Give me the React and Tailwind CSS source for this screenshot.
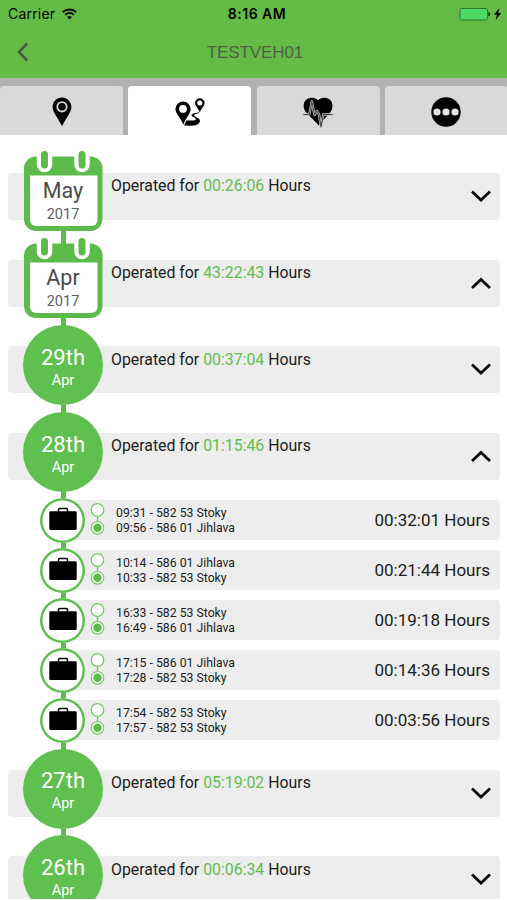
import { useState } from 'react';

const TABS = [
  { id: 'location', icon: PinIcon },
  { id: 'trips', icon: RouteIcon },
  { id: 'health', icon: HeartIcon },
  { id: 'more', icon: MoreIcon },
];

const MONTHS = [
  { title: 'May', sub: '2017', time: '00:26:06', days: [] },
  {
    title: 'Apr',
    sub: '2017',
    time: '43:22:43',
    days: [
      { title: '29th', sub: 'Apr', time: '00:37:04', trips: [] },
      {
        title: '28th',
        sub: 'Apr',
        time: '01:15:46',
        trips: [
          { from: '09:31 - 582 53 Stoky', to: '09:56 - 586 01 Jihlava', time: '00:32:01' },
          { from: '10:14 - 586 01 Jihlava', to: '10:33 - 582 53 Stoky', time: '00:21:44' },
          { from: '16:33 - 582 53 Stoky', to: '16:49 - 586 01 Jihlava', time: '00:19:18' },
          { from: '17:15 - 586 01 Jihlava', to: '17:28 - 582 53 Stoky', time: '00:14:36' },
          { from: '17:54 - 582 53 Stoky', to: '17:57 - 582 53 Stoky', time: '00:03:56' },
        ],
      },
      { title: '27th', sub: 'Apr', time: '05:19:02', trips: [] },
      { title: '26th', sub: 'Apr', time: '00:06:34', trips: [] },
    ],
  },
];

function PinIcon() {
  return (
    <svg width="20" height="30" viewBox="0 0 20 30">
      <path d="M10 .5C4.800.5.6 4.500.6 9.900c0 5.500 5.700 11.100 9.400 19.400 3.700-8.300 9.400-13.900 9.400-19.400C19.400 4.500 15.200.5 10 .5z" />
      <circle cx="10" cy="9.800" r="4.700" fill="none" stroke="#d6d6d6" strokeWidth="1.800" />
    </svg>
  );
}

function RouteIcon() {
  return (
    <svg width="30" height="28" viewBox="0 0 30 28">
      <path
        fillRule="evenodd"
        d="M8 3.500a7.600 7.600 0 0 0-7.600 7.600c0 4.600 5 8.400 7.900 15.600C11.200 19.500 15.600 15.700 15.600 11.100A7.600 7.600 0 0 0 8 3.500zm0 3.500a3.900 3.900 0 1 1 0 7.800 3.900 3.900 0 0 1 0-7.800z"
      />
      <path
        fillRule="evenodd"
        d="M24.800.3a4.800 4.800 0 0 0-4.800 4.800c0 2.900 3.300 5.300 4.800 9.400 1.500-4.100 4.800-6.500 4.800-9.400A4.800 4.800 0 0 0 24.800.3zm0 2.200a2.500 2.500 0 1 1 0 5 2.500 2.500 0 0 1 0-5z"
      />
      <path d="M24 14.500c-3 .2-7 .8-7.400 2.600-.3 1.900 4 2.300 4.200 4.100.1 1.100-2.200 1.300-4.800 1.300h-4.600L9 27.500c5 .3 10 .3 13-.8 3.200-1.200 3.800-4.500 1.800-6.100-1.500-1.200-4.600-2-4.600-3.400 0-1.200 2.400-1.700 4.800-2z" />
    </svg>
  );
}

function HeartIcon() {
  return (
    <svg width="30" height="31" viewBox="0 0 30 31">
      <path d="M15 3.200C11.500-1 .6-.2.6 9c0 7.400 9.900 12.200 15 19.500C20.700 21.200 29.500 16.400 29.500 9 29.500-.2 18.500-1 15 3.200z" />
      <path
        d="M.3 17.500h6l2.500-13 2.700 13.500 2.300-4 2.200 3.500 2 11.500 2.300-11.500h9.300"
        fill="none"
        stroke="#c4c5c3"
        strokeWidth="2.400"
        strokeLinejoin="round"
      />
      <path
        d="M.3 17.500h6l2.500-13 2.700 13.500 2.300-4 2.200 3.500 2 12.500 2.300-12.500h9.300"
        fill="none"
        stroke="#444"
        strokeWidth="1.100"
        strokeLinejoin="round"
      />
    </svg>
  );
}

function MoreIcon() {
  return (
    <svg width="30" height="30" viewBox="0 0 30 30">
      <circle cx="15" cy="15" r="14.700" />
      <g fill="#e4e4e2">
        <circle cx="6" cy="15" r="3.600" />
        <circle cx="15" cy="15" r="3.600" />
        <circle cx="24" cy="15" r="3.600" />
      </g>
    </svg>
  );
}

function BriefcaseIcon() {
  return (
    <svg width="28" height="24" viewBox="0 0 28 24">
      <path d="M9.500 5V2.800c0-.8.500-1.300 1.300-1.300h6.400c.8 0 1.300.5 1.300 1.300V5" fill="none" stroke="#000" strokeWidth="1.500" />
      <rect x=".3" y="4.300" width="27.400" height="18.700" rx="1.200" />
    </svg>
  );
}

const Chevron = ({ open }) => (
  <svg width="22" height="14" viewBox="0 0 22 14" fill="none" stroke="#0a0a0a" strokeWidth="2.800">
    <path d={open ? 'M2 12 11 3.500l9 8.500' : 'M2 2.500 11 11l9-8.500'} />
  </svg>
);

const StatusBar = () => (
  <div className="grid h-[27px] grid-cols-3 items-center pl-2 pr-1 text-black">
    <div className="flex items-center gap-[7px] text-[14px] tracking-[0.2px]">
      Carrier
      <svg width="15" height="12" viewBox="0 0 15 12" fill="none" stroke="#000" strokeWidth="1.900">
        <path d="M.8 4.200a9.600 9.600 0 0 1 13.400 0M3.200 6.800a6.100 6.100 0 0 1 8.600 0" />
        <path d="M7.500 11.500 5.200 9.100a3.300 3.300 0 0 1 4.600 0z" fill="#000" stroke="none" />
      </svg>
    </div>
    <div className="pl-[3px] text-center text-[14px] font-semibold tracking-[0.5px]">8:16 AM</div>
    <div className="flex items-center justify-end">
      <svg width="44" height="14" viewBox="0 0 44 14">
        <rect x="1" y="1.500" width="27.500" height="11.500" rx="1.500" fill="#4cd964" stroke="#2f7a2a" />
        <path d="M29.500 5c1.900.3 1.900 4 0 4.300z" />
        <path d="M40.500 1 35 7.800h3L36.600 13 42.200 6.100h-3z" />
      </svg>
    </div>
  </div>
);

const CalendarBadge = ({ title, sub }) => (
  <div className="absolute -top-[22px] left-[15px] h-[81px] w-20">
    <svg className="absolute inset-0" width="80" height="81" viewBox="0 0 80 81">
      <rect x="1" y="5.500" width="78.500" height="74.500" rx="12" fill="#5dbb4b" />
      <path d="M7 24.500h67.500V69a6 6 0 0 1-6 6H13a6 6 0 0 1-6-6z" fill="#fff" />
      {[21.500, 59].map((x) => (
        <g key={x} strokeLinecap="round">
          <path d={`M${x} 4v9.500`} stroke="#fff" strokeWidth="15.500" />
          <path d={`M${x} 3.500v10.500`} stroke="#5dbb4b" strokeWidth="7" />
        </g>
      ))}
    </svg>
    <div className="relative pt-[26px] text-center text-[#4b4b4b]">
      <div className="text-[21.500px] leading-[28px]">{title}</div>
      <div className="text-[14.500px] leading-[20px] text-[#606060]">{sub}</div>
    </div>
  </div>
);

const DayBadge = ({ title, sub }) => (
  <div className="absolute -top-[21px] left-[15px] h-[80px] w-20 rounded-full bg-[#5fc04f] pt-[18.500px] text-center text-white">
    <div className="text-[22px] leading-[27px]">{title}</div>
    <div className="text-[14.500px] leading-[20px]">{sub}</div>
  </div>
);

const SummaryRow = ({ item, open, onToggle, badge: Badge }) => (
  <div className="h-[86.700px] pl-2 pr-[7px] pt-[21px]">
    <div className="relative flex h-[47px] items-start justify-between rounded bg-[#ededed] pl-[103px] pr-2">
      <Badge title={item.title} sub={item.sub} />
      <p className="pt-[3.400px] text-[15.850px] leading-[20px] text-[#1c1c1c]">
        Operated for <span className="text-[#62bd50]">{item.time}</span> Hours
      </p>
      <button onClick={onToggle} className="pt-[16px]">
        <Chevron open={open} />
      </button>
    </div>
  </div>
);

const TripRow = ({ trip }) => (
  <div className="flex h-[50px] items-start pl-[40px] pr-[7px]">
    <div className="z-10 -mr-[22px] -mt-px flex h-[45px] w-[45px] shrink-0 items-center justify-center rounded-full bg-white pb-[3px] ring-[2.500px] ring-[#5fc04f] ring-inset">
      <BriefcaseIcon />
    </div>
    <div className="mt-[1.500px] flex h-10 flex-1 items-center rounded bg-[#ededed] pl-[27px] pr-[10px]">
      <svg width="15" height="34" viewBox="0 0 15 34" stroke="#79c66a" strokeWidth="1.200">
        <path d="M7.500 13v8" strokeWidth="1.500" />
        <circle cx="7.500" cy="7" r="6.300" fill="#fff" />
        <circle cx="7.500" cy="24.800" r="6.300" fill="#f6fbf5" />
        <circle cx="7.500" cy="24.800" r="4.200" fill="#5dbb4b" stroke="none" />
      </svg>
      <div className="ml-[11px] flex-1 pt-[2px] text-[12.250px] leading-[15.500px] text-[#1c1c1c]">
        <p>{trip.from}</p>
        <p>{trip.to}</p>
      </div>
      <p className="text-[17px] text-[#1c1c1c]">{trip.time} Hours</p>
    </div>
  </div>
);

const App = () => {
  const [activeTab, setActiveTab] = useState('trips');
  const [open, setOpen] = useState({ Apr: true, '28th': true });

  const toggle = (key) => setOpen({ ...open, [key]: !open[key] });

  return (
    <div className="h-[900px] w-[507px] overflow-hidden bg-white pb-[1px]">
      <div className="flex h-full flex-col overflow-hidden font-['Roboto',sans-serif]">
        <header className="h-[78px] shrink-0 bg-[#64bc46] font-['Inter',sans-serif]">
          <StatusBar />
          <div className="grid h-[50px] grid-cols-3 items-center pl-4">
            <button>
              <svg width="13" height="20" viewBox="0 0 13 20" fill="none" stroke="#4a5a42" strokeWidth="2.600">
                <path d="M11 1.500 3 10l8 8.500" />
              </svg>
            </button>
            <h1 className="-ml-[13px] pt-px text-center font-['Liberation_Sans',sans-serif] text-[17px] tracking-[-0.1px] text-[#4d5f45]">
              TESTVEH01
            </h1>
          </div>
        </header>

        <nav className="flex h-[57px] shrink-0 gap-[5.300px] bg-[#b1b2b0] pt-2">
          {TABS.map(({ id, icon: Icon }) => (
            <button
              key={id}
              onClick={() => setActiveTab(id)}
              className={`flex w-[123px] shrink-0 items-center justify-center rounded-t pt-[3px] ${
                activeTab === id ? 'bg-white' : 'bg-[#d9dad8]'
              }`}
            >
              <Icon />
            </button>
          ))}
        </nav>

        <main className="min-h-0 flex-1 overflow-hidden pt-[17px]">
          <div className="relative isolate">
            <div className="absolute bottom-0 left-[60.500px] top-10 -z-10 w-[5.500px] bg-[#5dbb4b]" />
            {MONTHS.map((month) => (
              <section key={month.title}>
                <SummaryRow
                  item={month}
                  badge={CalendarBadge}
                  open={!!open[month.title]}
                  onToggle={() => toggle(month.title)}
                />
                {open[month.title] &&
                  month.days.map((day) => (
                    <div key={day.title}>
                      <SummaryRow
                        item={day}
                        badge={DayBadge}
                        open={!!open[day.title]}
                        onToggle={() => toggle(day.title)}
                      />
                      {open[day.title] && day.trips.map((trip) => <TripRow key={trip.from} trip={trip} />)}
                    </div>
                  ))}
              </section>
            ))}
          </div>
        </main>
      </div>
    </div>
  );
};

export default App;
